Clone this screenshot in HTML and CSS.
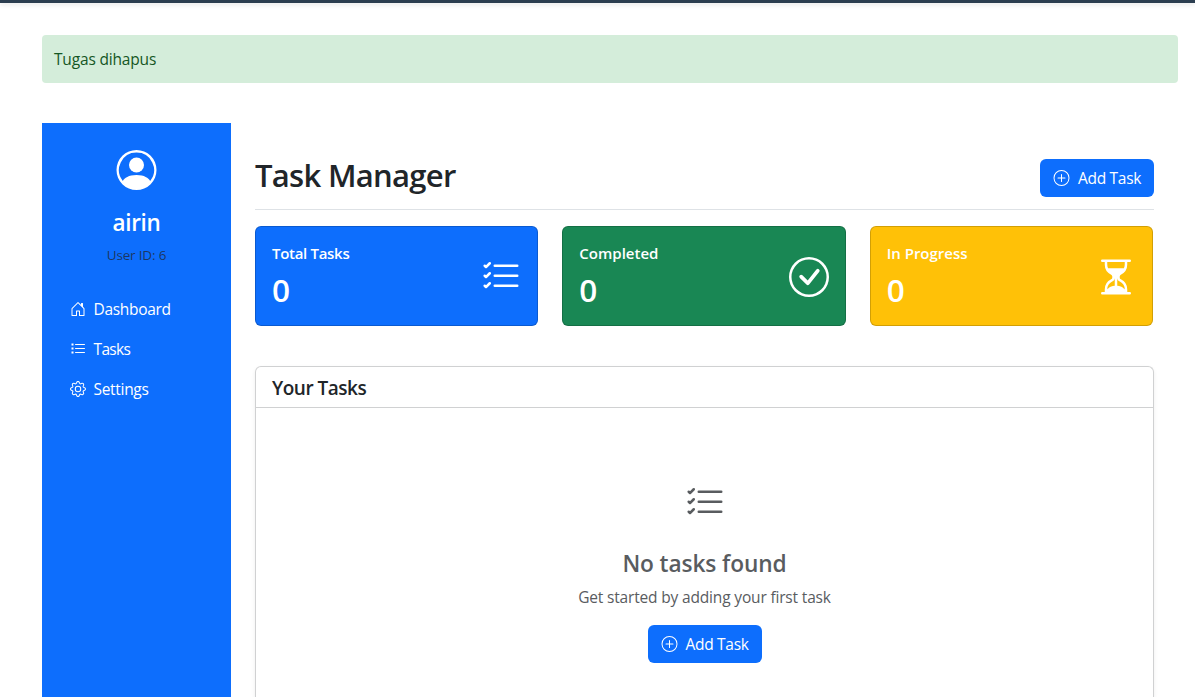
FILE: index.html
```html
<!DOCTYPE html>
<html lang="id">
<head>
<meta charset="utf-8">
<title>Task Manager</title>
<link rel="stylesheet" href="styles.css">
</head>
<body>
<svg class="sprite" aria-hidden="true">
  <symbol id="person" viewBox="0 0 16 16"><path d="M11 6a3 3 0 1 1-6 0 3 3 0 0 1 6 0"/><path fill-rule="evenodd" d="M0 8a8 8 0 1 1 16 0A8 8 0 0 1 0 8m8-7a7 7 0 0 0-5.468 11.37C3.242 11.226 4.805 10 8 10s4.757 1.225 5.468 2.37A7 7 0 0 0 8 1"/></symbol>
  <symbol id="house" viewBox="0 0 16 16"><path d="M8.354 1.146a.5.5 0 0 0-.708 0l-6 6A.5.5 0 0 0 1.5 7.5v7a.5.5 0 0 0 .5.5h4.5a.5.5 0 0 0 .5-.5v-4h2v4a.5.5 0 0 0 .5.5H14a.5.5 0 0 0 .5-.5v-7a.5.5 0 0 0-.146-.354L13 5.793V2.5a.5.5 0 0 0-.5-.5h-1a.5.5 0 0 0-.5.5v1.293zM2.5 14V7.707l5.5-5.5 5.5 5.5V14H10v-4a.5.5 0 0 0-.5-.5h-3a.5.5 0 0 0-.5.5v4z"/></symbol>
  <symbol id="list" viewBox="0 0 16 16"><path d="M1.500 2.500h2v2h-2zM1.500 6.500h2v2h-2zM1.500 10.500h2v2h-2zM5.500 3h9a.5.5 0 0 1 0 1h-9a.5.5 0 0 1 0-1m0 4h9a.5.5 0 0 1 0 1h-9a.5.5 0 0 1 0-1m0 4h9a.5.5 0 0 1 0 1h-9a.5.5 0 0 1 0-1"/></symbol>
  <symbol id="gear" viewBox="0 0 16 16"><path d="M8 4.754a3.246 3.246 0 1 0 0 6.492 3.246 3.246 0 0 0 0-6.492M5.754 8a2.246 2.246 0 1 1 4.492 0 2.246 2.246 0 0 1-4.492 0"/><path d="M9.796 1.343c-.527-1.79-3.065-1.79-3.592 0l-.094.319a.873.873 0 0 1-1.255.52l-.292-.16c-1.640-.892-3.433.902-2.540 2.541l.159.292a.873.873 0 0 1-.52 1.255l-.319.094c-1.790.527-1.790 3.065 0 3.592l.319.094a.873.873 0 0 1 .52 1.255l-.16.292c-.892 1.640.901 3.434 2.541 2.540l.292-.159a.873.873 0 0 1 1.255.52l.094.319c.527 1.790 3.065 1.790 3.592 0l.094-.319a.873.873 0 0 1 1.255-.52l.292.16c1.640.893 3.434-.902 2.540-2.541l-.159-.292a.873.873 0 0 1 .52-1.255l.319-.094c1.790-.527 1.790-3.065 0-3.592l-.319-.094a.873.873 0 0 1-.52-1.255l.16-.292c.893-1.640-.902-3.433-2.541-2.540l-.292.159a.873.873 0 0 1-1.255-.52zm-2.633.283c.246-.835 1.428-.835 1.674 0l.094.319a1.873 1.873 0 0 0 2.693 1.115l.291-.16c.764-.415 1.600.42 1.184 1.185l-.159.292a1.873 1.873 0 0 0 1.116 2.692l.318.094c.835.246.835 1.428 0 1.674l-.319.094a1.873 1.873 0 0 0-1.115 2.693l.16.291c.415.764-.42 1.600-1.185 1.184l-.291-.159a1.873 1.873 0 0 0-2.693 1.116l-.094.318c-.246.835-1.428.835-1.674 0l-.094-.319a1.873 1.873 0 0 0-2.692-1.115l-.292.16c-.764.415-1.600-.42-1.184-1.185l.159-.291A1.873 1.873 0 0 0 1.945 8.930l-.319-.094c-.835-.246-.835-1.428 0-1.674l.319-.094A1.873 1.873 0 0 0 3.060 4.377l-.16-.292c-.415-.764.42-1.600 1.185-1.184l.292.159a1.873 1.873 0 0 0 2.692-1.115z"/></symbol>
  <symbol id="checks" viewBox="0 0 16 16"><path fill-rule="evenodd" d="M5 11.5a.5.5 0 0 1 .5-.5h9a.5.5 0 0 1 0 1h-9a.5.5 0 0 1-.5-.5m0-4a.5.5 0 0 1 .5-.5h9a.5.5 0 0 1 0 1h-9a.5.5 0 0 1-.5-.5m0-4a.5.5 0 0 1 .5-.5h9a.5.5 0 0 1 0 1h-9a.5.5 0 0 1-.5-.5M3.854 2.146a.5.5 0 0 1 0 .708l-1.500 1.500a.5.5 0 0 1-.708 0l-.5-.5a.5.5 0 1 1 .708-.708L2 3.293l1.146-1.147a.5.5 0 0 1 .708 0m0 4a.5.5 0 0 1 0 .708l-1.500 1.500a.5.5 0 0 1-.708 0l-.5-.5a.5.5 0 1 1 .708-.708L2 7.293l1.146-1.147a.5.5 0 0 1 .708 0m0 4a.5.5 0 0 1 0 .708l-1.500 1.500a.5.5 0 0 1-.708 0l-.5-.5a.5.5 0 0 1 .708-.708l.146.147 1.146-1.147a.5.5 0 0 1 .708 0"/></symbol>
  <symbol id="check-circle" viewBox="0 0 16 16"><path d="M8 15A7 7 0 1 1 8 1a7 7 0 0 1 0 14m0 1A8 8 0 1 0 8 0a8 8 0 0 0 0 16"/><path d="m10.970 4.970-.02.022-3.473 4.425-2.093-2.094a.75.75 0 0 0-1.060 1.060L6.970 11.030a.75.75 0 0 0 1.079-.02l3.992-4.990a.75.75 0 0 0-1.071-1.050"/></symbol>
  <symbol id="hourglass" viewBox="0 0 16 16"><path d="M2.500 15a.5.5 0 1 1 0-1h1v-1a4.500 4.500 0 0 1 2.557-4.060c.29-.139.443-.377.443-.59v-.7c0-.213-.154-.451-.443-.59A4.500 4.500 0 0 1 3.500 3V2h-1a.5.5 0 0 1 0-1h11a.5.5 0 0 1 0 1h-1v1a4.500 4.500 0 0 1-2.557 4.060c-.29.139-.443.377-.443.59v.7c0 .213.154.451.443.59A4.500 4.500 0 0 1 12.500 13v1h1a.5.5 0 0 1 0 1zm2-13v1c0 .537.120 1.045.337 1.500h6.326c.216-.455.337-.963.337-1.500V2zm3 6.350c0 .701-.478 1.236-1.011 1.492A3.500 3.500 0 0 0 4.500 13s.866-1.299 3-1.480zm1 0v3.170c2.134.181 3 1.480 3 1.480a3.500 3.500 0 0 0-1.989-3.158C8.978 9.586 8.500 9.052 8.500 8.351z"/></symbol>
  <symbol id="plus" viewBox="0 0 16 16"><path d="M8 15A7 7 0 1 1 8 1a7 7 0 0 1 0 14m0 1A8 8 0 1 0 8 0a8 8 0 0 0 0 16"/><path d="M8 4a.5.5 0 0 1 .5.5v3h3a.5.5 0 0 1 0 1h-3v3a.5.5 0 0 1-1 0v-3h-3a.5.5 0 0 1 0-1h3v-3A.5.5 0 0 1 8 4"/></symbol>
</svg>
<div class="topbar"></div>
<div class="alert">Tugas dihapus</div>
<div class="layout">
  <aside class="sidebar">
    <svg class="avatar"><use href="#person"/></svg>
    <h4 class="username">airin</h4>
    <small class="userid">User ID: 6</small>
    <nav class="nav">
      <a class="nav-link"><svg class="icon"><use href="#house"/></svg><span>Dashboard</span></a>
      <a class="nav-link nav-tasks"><svg class="icon"><use href="#list"/></svg><span>Tasks</span></a>
      <a class="nav-link"><svg class="icon"><use href="#gear"/></svg><span>Settings</span></a>
    </nav>
  </aside>
  <main class="main">
    <header class="header">
      <h1 class="title">Task Manager</h1>
      <button class="btn"><svg class="icon"><use href="#plus"/></svg><span>Add Task</span></button>
    </header>
    <section class="stats">
      <div class="stat primary"><div><h6 class="label label-total">Total Tasks</h6><h2 class="value">0</h2></div><svg class="big"><use href="#checks"/></svg></div>
      <div class="stat success"><div><h6 class="label">Completed</h6><h2 class="value">0</h2></div><svg class="big"><use href="#check-circle"/></svg></div>
      <div class="stat warning"><div><h6 class="label">In Progress</h6><h2 class="value">0</h2></div><svg class="big"><use href="#hourglass"/></svg></div>
    </section>
    <section class="card">
      <div class="card-header"><h5 class="card-title">Your Tasks</h5></div>
      <div class="empty">
        <svg class="big"><use href="#checks"/></svg>
        <h4 class="empty-title">No tasks found</h4>
        <p class="empty-text">Get started by adding your first task</p>
        <button class="btn"><svg class="icon"><use href="#plus"/></svg><span>Add Task</span></button>
      </div>
    </section>
  </main>
</div>
</body>
</html>
```
FILE: styles.css
```css
* { box-sizing: border-box; }
html, body { height: 100%; }
body { margin: 0; overflow: hidden; background: #fff; color: #212529; font: 15.5px/24px "Open Sans", "Noto Sans", sans-serif; letter-spacing: -.17px; display: flex; flex-direction: column; }
h1, h2, h4, h5, h6, p { margin: 0; font-weight: 600; white-space: nowrap; }
svg { fill: currentColor; flex: none; display: block; }
span { white-space: nowrap; }
.sprite { display: none; }
.topbar { flex: none; height: 3px; background: #2c3e50; box-shadow: 0 2px 4px rgba(0, 0, 0, .1); }
.alert { flex: none; height: 48px; margin: 32px 17px 0 42px; padding: 12px; border-radius: 4px; background: #d4edda; color: #155724; }
.layout { flex: 1; min-height: 0; display: flex; margin: 40px 41px 0 42px; gap: 24px; }
.sidebar { width: 189px; background: #0d6efd; color: #fff; display: flex; flex-direction: column; align-items: center; padding-top: 27px; }
.avatar { width: 41px; height: 40px; }
.username { margin-top: 18px; font-size: 22.5px; line-height: 29px; letter-spacing: -.3px; }
.userid { margin-top: 8px; font-size: 13.5px; line-height: 21px; color: rgba(33, 37, 41, .75); }
.nav { align-self: stretch; margin-top: 23px; padding-left: 27.5px; }
.nav-link { display: flex; align-items: center; gap: 8px; height: 40px; color: #fff; letter-spacing: -.3px; }
.nav-tasks { letter-spacing: -.65px; }
.icon { width: 16px; height: 16px; }
.main { flex: 1; min-width: 0; padding-top: 36px; display: flex; flex-direction: column; }
.header { flex: none; display: flex; justify-content: space-between; height: 51px; border-bottom: 1px solid #dee2e6; }
.title { font-size: 31px; line-height: 33px; letter-spacing: -.7px; }
.btn { display: flex; align-items: center; gap: 8px; width: 114px; height: 38px; padding: 0 0 0 13px; border: 0; border-radius: 6px; background: #0d6efd; color: #fff; font: inherit; letter-spacing: -.3px; }
.btn .icon { width: 17px; }
.stats { flex: none; display: grid; grid-template-columns: repeat(3, 1fr); gap: 24px; margin: 16px 1px 0 0; }
.stat { height: 100px; display: flex; justify-content: space-between; align-items: center; padding: 0 16px; border: 1px solid rgba(0, 0, 0, .175); border-radius: 6px; color: #fff; }
.stat .big { margin-top: 2px; }
.primary { background: #0d6efd; }
.success { background: #198754; }
.warning { background: #ffc107; }
.label { font-size: 15px; line-height: 19px; letter-spacing: 0; }
.label-total { letter-spacing: -.3px; }
.value { margin-top: 8px; font-size: 31.5px; line-height: 38px; letter-spacing: 0; }
.big { width: 40px; height: 40px; }
.card { flex: 1; min-height: 0; margin-top: 40px; border: 1px solid #d0d1d2; border-bottom: 0; border-radius: 6px 6px 0 0; box-shadow: 0 2px 4px rgba(0, 0, 0, .075); }
.card-header { height: 41px; padding: 9px 16px; border-bottom: 1px solid #d0d1d2; }
.card-title { font-size: 19px; line-height: 24px; letter-spacing: -.5px; }
.empty { display: flex; flex-direction: column; align-items: center; padding-top: 75px; color: #595c5f; }
.empty-title { margin-top: 26px; font-size: 22.7px; line-height: 29px; letter-spacing: -.1px; }
.empty-text { margin: 7px 0 16px; font-weight: 400; }
```
